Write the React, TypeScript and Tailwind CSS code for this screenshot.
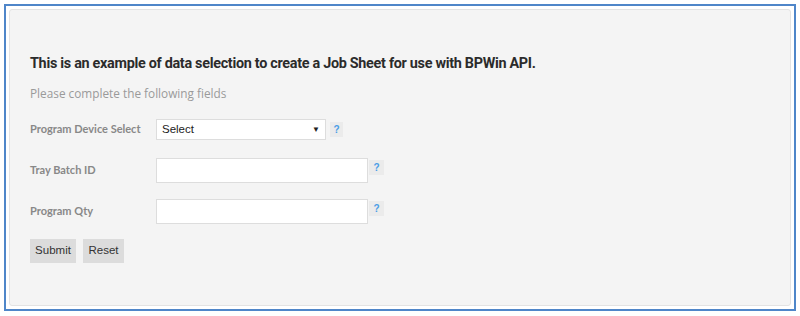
export default function App() {
  return (
    <div className="w-[800px] h-[316px] bg-white p-[4px]">
      <div className="h-[307px] border-2 border-[#4f86c9] p-[3px]">
        <div className="h-full rounded-[3px] border border-[#e3e3e3] bg-[#f4f4f4] pl-[20px] pt-[44px]">
          <h1 className="font-['Roboto',sans-serif] text-[14.4px] font-bold text-[#2b2b2b] leading-[20px] tracking-[-0.3px]">
            This is an example of data selection to create a Job Sheet for use with BPWin API.
          </h1>
          <p className="mt-[11px] font-['Open_Sans',sans-serif] text-[11.8px] text-[#9a9a9a] leading-[16px]">
            Please complete the following fields
          </p>
          <div className="font-['Lato',sans-serif] text-[11px] font-bold text-[#888]">
            <div className="mt-[18px] flex items-center h-[21px]">
              <label className="w-[126px]">Program Device Select</label>
              <div className="flex w-[170px] h-[21px] items-center justify-between border border-[#ddd] bg-white pl-[5px] pr-[5px] font-['Liberation_Sans',sans-serif] text-[11.5px] font-normal text-[#222]">
                <span>Select</span>
                <span className="text-[8px]">▼</span>
              </div>
              <span className="ml-[4px] flex h-[15px] w-[13px] items-center justify-center bg-[#ebebeb] font-['Liberation_Sans',sans-serif] text-[10px] font-bold text-[#4a9de6]">?</span>
            </div>
            <div className="mt-[18px] flex items-center h-[25px]">
              <label className="w-[126px]">Tray Batch ID</label>
              <div className="w-[212px] h-[25px] border border-[#ddd] bg-white" />
              <span className="ml-[1px] -mt-[7px] flex h-[15px] w-[15px] items-center justify-center bg-[#ebebeb] font-['Liberation_Sans',sans-serif] text-[10px] font-bold text-[#4a9de6]">?</span>
            </div>
            <div className="mt-[16px] flex items-center h-[25px]">
              <label className="w-[126px]">Program Qty</label>
              <div className="w-[212px] h-[25px] border border-[#ddd] bg-white" />
              <span className="ml-[1px] -mt-[7px] flex h-[15px] w-[15px] items-center justify-center bg-[#ebebeb] font-['Liberation_Sans',sans-serif] text-[10px] font-bold text-[#4a9de6]">?</span>
            </div>
          </div>
          <div className="mt-[15px] flex gap-[7px] font-['Liberation_Sans',sans-serif] text-[11.5px] text-[#333]">
            <button className="h-[24px] w-[46px] bg-[#dcdcdc]">Submit</button>
            <button className="h-[24px] w-[41px] bg-[#dcdcdc]">Reset</button>
          </div>
        </div>
      </div>
    </div>
  )
}
